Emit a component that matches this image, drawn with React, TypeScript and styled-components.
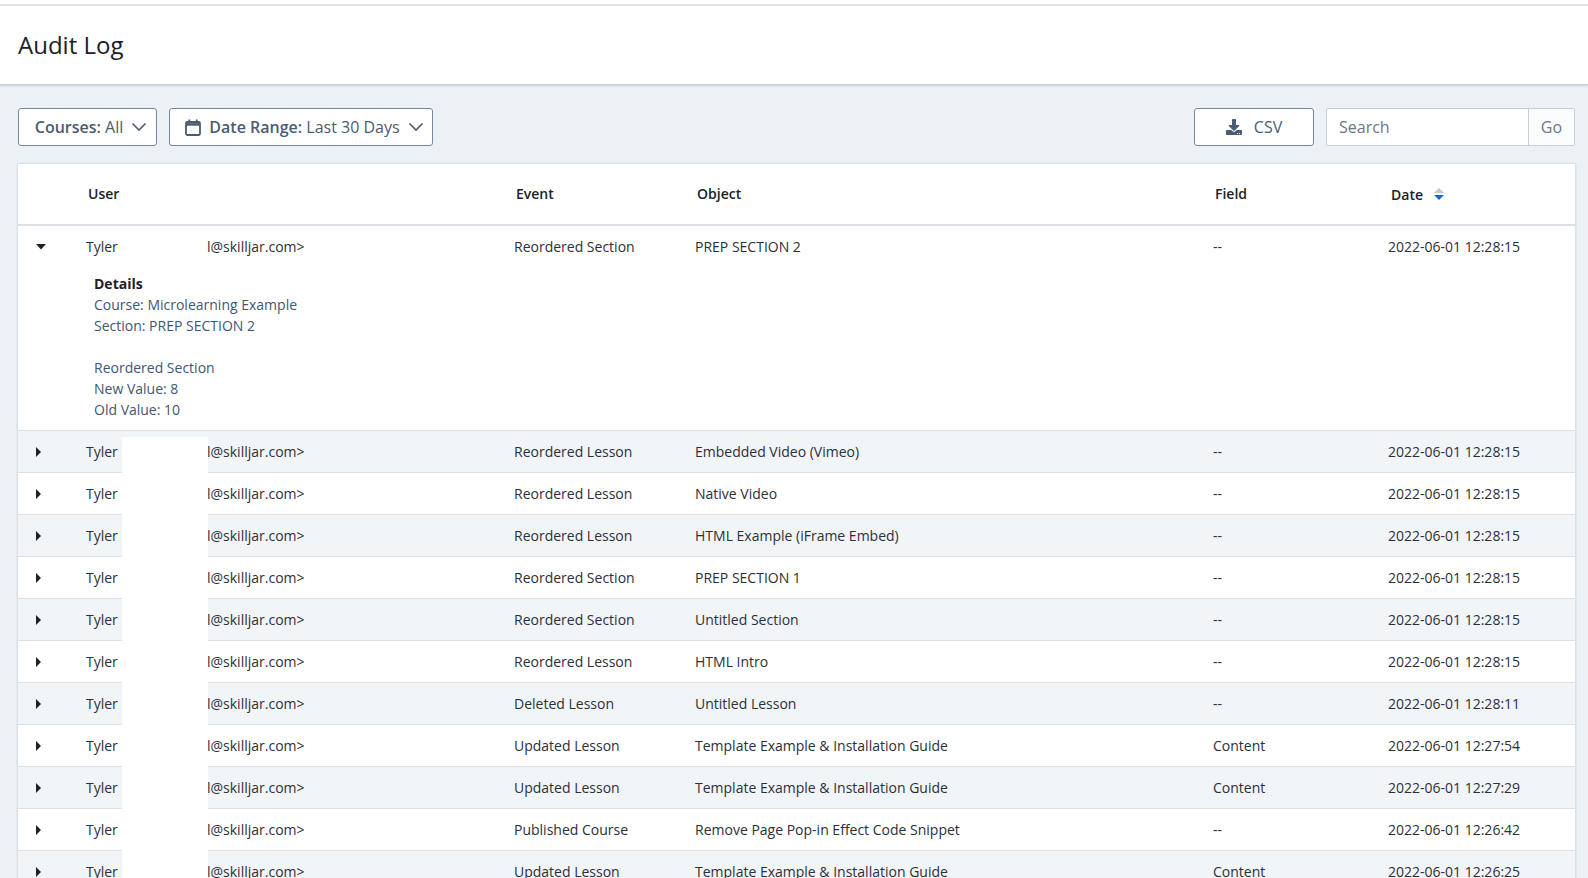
import React from 'react';
import styled, { createGlobalStyle } from 'styled-components';
import { FaDownload } from 'react-icons/fa';

const GlobalStyle = createGlobalStyle`
  html, body {
    margin: 0;
    height: 100%;
    overflow: hidden;
    background: #ecf1f6;
    font-family: 'Open Sans', 'Noto Sans', sans-serif;
  }
`;

const TopLine = styled.div`
  height: 4px;
  background: #ffffff;
  border-bottom: 2px solid #e3e5e8;
`;

const PageHeader = styled.header`
  height: 79px;
  box-sizing: border-box;
  background: #ffffff;
  padding: 0 18px;
  display: flex;
  align-items: center;
  border-bottom: 1px solid #c9ced4;
  box-shadow: 0 1px 2px rgba(30, 50, 80, 0.18);
`;

const Title = styled.h1`
  margin: 0 0 2px;
  font-size: 24px;
  font-weight: 400;
  color: #1b2026;
`;

const Toolbar = styled.div`
  display: flex;
  align-items: center;
  gap: 12px;
  padding: 23px 13px 17px 18px;
`;

const FilterButton = styled.button<{ $width: number; $inset?: number }>`
  width: ${p => p.$width}px;
  height: 38px;
  box-sizing: border-box;
  display: flex;
  align-items: center;
  justify-content: center;
  gap: 8px;
  background: #ffffff;
  border: 1px solid #75889f;
  border-radius: 3px;
  color: #4a5c73;
  font-family: inherit;
  font-size: 16px;
  padding: 0 0 0 ${p => p.$inset ?? 0}px;
  white-space: nowrap;

  b {
    font-weight: 600;
  }
`;

const Spacer = styled.div`
  flex: 1;
`;

const SearchGroup = styled.div`
  display: flex;
  width: 249px;
  height: 38px;
  box-sizing: border-box;
  background: #ffffff;
  border: 1px solid #c6ced8;
  border-radius: 2px;
  font-size: 16px;
  color: #6b7785;
`;

const SearchText = styled.div`
  flex: 1;
  display: flex;
  align-items: center;
  padding-left: 12px;
`;

const GoButton = styled.div`
  width: 45px;
  display: flex;
  align-items: center;
  justify-content: center;
  border-left: 1px solid #c6ced8;
  background: #fbfcfd;
`;

const Card = styled.section`
  position: relative;
  margin: 0 12px 0 17px;
  background: #ffffff;
  border: 1px solid #dde1e6;
  border-bottom: none;
  border-radius: 2px 2px 0 0;
  box-shadow: 0 0 2px rgba(30, 50, 80, 0.12);
`;

const COLUMNS = '68px 428px 181px 518px 175px 1fr';

const HeadRow = styled.div`
  display: grid;
  grid-template-columns: ${COLUMNS};
  height: 62px;
  box-sizing: border-box;
  align-items: center;
  border-bottom: 2px solid #dde1e6;
  font-size: 14px;
  font-weight: 600;
  color: #1d2228;
`;

const HeadCell = styled.div`
  padding: 0 0 2px 2px;
`;

const DateHeadCell = styled.div`
  display: flex;
  align-items: center;
  gap: 11px;
  padding-left: 3px;
`;

const RowGrid = styled.div<{ $striped?: boolean }>`
  display: grid;
  grid-template-columns: ${COLUMNS};
  height: 42px;
  box-sizing: border-box;
  align-items: center;
  border-bottom: 1px solid #dde1e6;
  background: ${p => (p.$striped ? '#f2f5f8' : '#ffffff')};
  font-size: 14px;
  color: #2a3038;
`;

const CaretCell = styled.div`
  display: flex;
  padding-left: 18px;
`;

const UserCell = styled.div`
  display: flex;
`;

const FirstName = styled.span`
  width: 121px;
`;

const ExpandedRow = styled.div`
  border-bottom: 1px solid #dde1e6;
  padding-bottom: 10px;
`;

const OpenRow = styled(RowGrid)`
  border-bottom: none;
  height: 41px;
  background: transparent;
`;

const Details = styled.div`
  padding: 6px 0 0 76px;
  font-size: 14px;
  line-height: 21px;
  color: #43566f;
`;

const DetailsTitle = styled.div`
  font-weight: 700;
  color: #1d2228;
`;

const DetailsGap = styled.div`
  height: 21px;
`;

const Redaction = styled.div`
  position: absolute;
  left: 104px;
  top: 273px;
  width: 86px;
  height: 460px;
  background: #ffffff;
`;

const Chevron = () => (
  <svg width="16" height="10" viewBox="0 0 16 10" fill="none" stroke="#4a5c73" strokeWidth="1.6">
    <path d="M1.5 1.5 8 8l6.5-6.5" />
  </svg>
);

const CalendarIcon = () => (
  <svg width="16" height="17" viewBox="0 0 16 17" fill="none" stroke="#4a5c73">
    <rect x="1" y="3" width="14" height="13" rx="1.2" strokeWidth="1.8" />
    <path d="M1 5.4h14" strokeWidth="2.6" />
    <path d="M4.3 0.5v3M11.7 0.5v3" strokeWidth="1.8" />
  </svg>
);

const SortIcon = () => (
  <svg width="10" height="12" viewBox="0 0 10 12">
    <path d="M5 0 10 5H0z" fill="#c4c7cb" />
    <path d="M5 12 0 7h10z" fill="#1668c7" />
  </svg>
);

const Caret = ({ open }: { open?: boolean }) =>
  open ? (
    <svg width="11" height="6" viewBox="0 0 11 6">
      <path d="M0 0h10L5 5.5z" fill="#1d2228" />
    </svg>
  ) : (
    <svg width="6" height="10" viewBox="0 0 6 10">
      <path d="M0 0l5 5-5 5z" fill="#1d2228" />
    </svg>
  );

interface LogRow {
  event: string;
  object: string;
  field: string;
  date: string;
}

const rows: LogRow[] = [
  { event: 'Reordered Lesson', object: 'Embedded Video (Vimeo)', field: '--', date: '2022-06-01 12:28:15' },
  { event: 'Reordered Lesson', object: 'Native Video', field: '--', date: '2022-06-01 12:28:15' },
  { event: 'Reordered Lesson', object: 'HTML Example (iFrame Embed)', field: '--', date: '2022-06-01 12:28:15' },
  { event: 'Reordered Section', object: 'PREP SECTION 1', field: '--', date: '2022-06-01 12:28:15' },
  { event: 'Reordered Section', object: 'Untitled Section', field: '--', date: '2022-06-01 12:28:15' },
  { event: 'Reordered Lesson', object: 'HTML Intro', field: '--', date: '2022-06-01 12:28:15' },
  { event: 'Deleted Lesson', object: 'Untitled Lesson', field: '--', date: '2022-06-01 12:28:11' },
  { event: 'Updated Lesson', object: 'Template Example & Installation Guide', field: 'Content', date: '2022-06-01 12:27:54' },
  { event: 'Updated Lesson', object: 'Template Example & Installation Guide', field: 'Content', date: '2022-06-01 12:27:29' },
  { event: 'Published Course', object: 'Remove Page Pop-in Effect Code Snippet', field: '--', date: '2022-06-01 12:26:42' },
  { event: 'Updated Lesson', object: 'Template Example & Installation Guide', field: 'Content', date: '2022-06-01 12:26:25' },
];

const User = () => (
  <UserCell>
    <FirstName>Tyler</FirstName>
    <span>l@skilljar.com&gt;</span>
  </UserCell>
);

const App: React.FC = () => (
  <>
    <GlobalStyle />
    <TopLine />
    <PageHeader>
      <Title>Audit Log</Title>
    </PageHeader>
    <Toolbar>
      <FilterButton $width={139} $inset={7}>
        <span>
          <b>Courses:</b> All
        </span>
        <Chevron />
      </FilterButton>
      <FilterButton $width={264} $inset={7}>
        <CalendarIcon />
        <span>
          <b>Date Range:</b> Last 30 Days
        </span>
        <Chevron />
      </FilterButton>
      <Spacer />
      <FilterButton $width={120}>
        <FaDownload size={16} style={{ marginRight: 4 }} />
        <span>CSV</span>
      </FilterButton>
      <SearchGroup>
        <SearchText>Search</SearchText>
        <GoButton>Go</GoButton>
      </SearchGroup>
    </Toolbar>
    <Card>
      <HeadRow>
        <div />
        <HeadCell>User</HeadCell>
        <HeadCell>Event</HeadCell>
        <HeadCell>Object</HeadCell>
        <HeadCell>Field</HeadCell>
        <DateHeadCell>
          Date <SortIcon />
        </DateHeadCell>
      </HeadRow>
      <ExpandedRow>
        <OpenRow>
          <CaretCell>
            <Caret open />
          </CaretCell>
          <User />
          <div>Reordered Section</div>
          <div>PREP SECTION 2</div>
          <div>--</div>
          <div>2022-06-01 12:28:15</div>
        </OpenRow>
        <Details>
          <DetailsTitle>Details</DetailsTitle>
          <div>Course: Microlearning Example</div>
          <div>Section: PREP SECTION 2</div>
          <DetailsGap />
          <div>Reordered Section</div>
          <div>New Value: 8</div>
          <div>Old Value: 10</div>
        </Details>
      </ExpandedRow>
      {rows.map((row, i) => (
        <RowGrid key={i} $striped={i % 2 === 0}>
          <CaretCell>
            <Caret />
          </CaretCell>
          <User />
          <div>{row.event}</div>
          <div>{row.object}</div>
          <div>{row.field}</div>
          <div>{row.date}</div>
        </RowGrid>
      ))}
      <Redaction />
    </Card>
  </>
);

export default App;
